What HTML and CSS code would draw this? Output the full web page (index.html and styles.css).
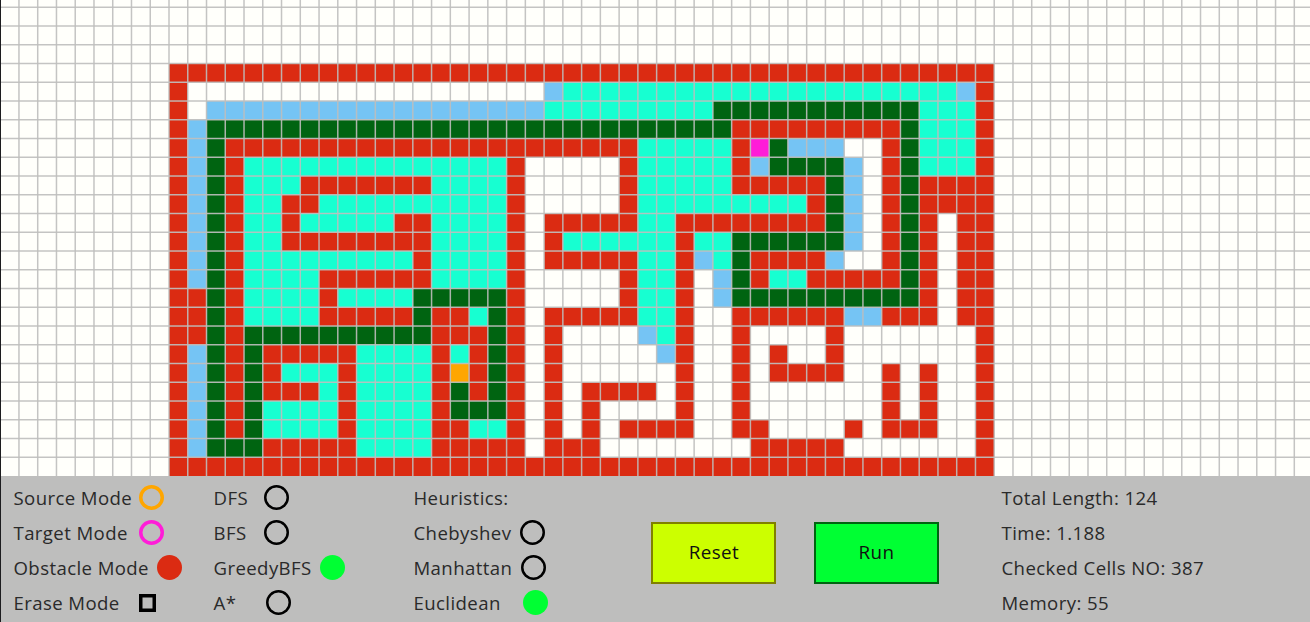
FILE: index.html
```
<!DOCTYPE html>
<html lang="en">
<head>
<meta charset="utf-8">
<title>Pathfinding Visualizer</title>
<link rel="stylesheet" href="styles.css">
</head>
<body>
<div class="app">
  <svg class="board" id="board" width="1310" height="476" viewBox="0 0 1310 476"></svg>
  <div class="panel">
    <div class="col modes">
      <div class="row"><span class="label w125">Source Mode</span><i class="ring source"></i></div>
      <div class="row"><span class="label w125">Target Mode</span><i class="ring target"></i></div>
      <div class="row"><span class="label w144">Obstacle Mode</span><i class="ring obstacle"></i></div>
      <div class="row"><span class="label w125">Erase Mode</span><i class="square"></i></div>
    </div>
    <div class="col algorithms">
      <div class="row"><span class="label w49">DFS</span><i class="ring"></i></div>
      <div class="row"><span class="label w49">BFS</span><i class="ring"></i></div>
      <div class="row"><span class="label w106">GreedyBFS</span><i class="ring on"></i></div>
      <div class="row"><span class="label w52">A*</span><i class="ring"></i></div>
    </div>
    <div class="col heuristics">
      <div class="row"><span class="label">Heuristics:</span></div>
      <div class="row"><span class="label w106">Chebyshev</span><i class="ring"></i></div>
      <div class="row"><span class="label w107">Manhattan</span><i class="ring"></i></div>
      <div class="row"><span class="label w108">Euclidean</span><i class="ring on"></i></div>
    </div>
    <div class="buttons">
      <button class="btn reset">Reset</button>
      <button class="btn run">Run</button>
    </div>
    <div class="col stats">
      <div class="row"><span class="label">Total Length: 124</span></div>
      <div class="row"><span class="label">Time: 1.188</span></div>
      <div class="row"><span class="label">Checked Cells NO: 387</span></div>
      <div class="row"><span class="label">Memory: 55</span></div>
    </div>
  </div>
</div>
<script src="board.js"></script>
</body>
</html>
```
FILE: styles.css
```
body {
  margin: 0;
  background: #fffffb;
  font-family: "Open Sans", "Noto Sans", sans-serif;
}
.app {
  width: 1310px;
  height: 622px;
  overflow: hidden;
  box-sizing: border-box;
}
.board { display: block; background: #fffffb; }
.grid-line { stroke: #bebebd; stroke-opacity: 0.9; stroke-width: 1.5; }
.edge { fill: #1c1c1e; }
.cell-wall { fill: #db2b12; }
.cell-checked { fill: #17ffd1; }
.cell-open { fill: #75c4f4; }
.cell-path { fill: #006411; }
.cell-target { fill: #ff1cd8; }
.cell-source { fill: #ffa600; }

.panel {
  display: grid;
  grid-template-columns: 200px 200px 237px 351px 1fr;
  height: 146px;
  box-sizing: border-box;
  padding: 4px 0 0 13px;
  border-left: 1px solid #1c1c1e;
  background: #bebebd;
}
.col { display: flex; flex-direction: column; }
.row { display: flex; align-items: center; height: 35px; }
.label {
  flex-shrink: 0;
  margin-left: -0.5px;
  margin-right: 0.5px;
  font-size: 18.6px;
  font-weight: 400;
  letter-spacing: 0.4px;
  line-height: 35px;
  color: #2a2a2a;
  white-space: nowrap;
}
.w49 { width: 49.5px; }
.w52 { width: 52px; }
.w106 { width: 106px; }
.w107 { width: 107px; }
.w108 { width: 108.5px; }
.w125 { width: 124.5px; }
.w144 { width: 143px; }
.ring {
  width: 25px;
  height: 25px;
  border-radius: 50%;
  box-shadow: inset 0 0 0 2.5px #000;
}
.ring.source { box-shadow: inset 0 0 0 3.5px #ffa600; }
.ring.target { box-shadow: inset 0 0 0 3.5px #ff1cd8; }
.ring.obstacle { box-shadow: none; background: #db2b12; }
.ring.on { box-shadow: none; background: #00ff33; }
.square { width: 17.5px; height: 17.5px; margin-top: 1px; box-shadow: inset 0 0 0 3.5px #000; }
.buttons { display: flex; gap: 37.5px; padding-top: 42px; }
.btn {
  width: 125px;
  height: 62px;
  padding: 0 0 3px 1px;
  font: 400 18.8px "Open Sans", "Noto Sans", sans-serif;
  letter-spacing: 0.4px;
  color: #101010;
}
.reset { background: #ccff00; border: 2px solid #808000; }
.run { background: #00ff33; border: 2px solid #006411; }
```
FILE: board.js
```
// Each row is a list of runs: cell type followed by its length.
const rows = [
  "#44",
  "#1 .19 b1 c21 b1 #1",
  "#1 .1 b18 c9 g11 c3 #1",
  "#1 b1 g28 #9 g1 c3 #1",
  "#1 b1 g1 #22 c5 #1 m1 g1 b3 .2 #1 g1 c3 #1",
  "#1 b1 g1 #1 c14 #1 .5 #1 c5 #1 b1 g4 b1 .1 #1 g1 c3 #1",
  "#1 b1 g1 #1 c3 #7 c4 #1 .5 #1 c5 #5 g1 b1 .1 #1 g1 #4",
  "#1 b1 g1 #1 c2 #2 c10 #1 .5 #1 c9 #1 g1 b1 .1 #1 g1 #4",
  "#1 b1 g1 #1 c2 #1 c5 #2 c4 #1 .1 #5 c2 #8 g1 b1 .1 #1 g1 #1 .1 #2",
  "#1 b1 g1 #1 c2 #8 c4 #1 .1 #1 c6 #1 c2 g6 b1 .1 #1 g1 #1 .1 #2",
  "#1 b1 g1 #1 c9 #1 c4 #1 .1 #5 c2 #1 b1 c1 g1 #4 b1 .2 #1 g1 #1 .1 #2",
  "#1 b1 g1 #1 c4 #6 c4 #1 .5 #1 c2 #1 .1 b1 g1 #1 c2 #5 g1 #1 .1 #2",
  "#2 g1 #1 c4 #1 c4 g5 #1 .5 #1 c2 #1 .1 b1 g10 #1 .1 #2",
  "#2 g1 #1 c4 #5 g1 #2 c1 g1 #1 .1 #5 c2 #1 .2 #6 b2 #3 .1 #2",
  "#2 g1 #1 g10 #3 g1 #1 .1 #1 .4 b1 c1 #1 .2 #1 .4 #1 .7 #1",
  "#1 b1 g1 #1 g1 #5 c4 #1 c1 #1 g1 #1 .1 #1 .5 b1 #1 .2 #1 .1 #1 .2 #1 .7 #1",
  "#1 b1 g1 #1 g1 #1 c3 #1 c4 #1 o1 #1 g1 #1 .1 #1 .6 #1 .2 #1 .1 #4 .2 #1 .1 #1 .2 #1",
  "#1 b1 g1 #1 g1 #3 c1 #1 c4 #1 g1 #1 g1 #1 .1 #1 .1 #4 .1 #1 .2 #1 .7 #1 .1 #1 .2 #1",
  "#1 b1 g1 #1 g1 c4 #1 c4 #1 g3 #1 .1 #1 .1 #1 .4 #1 .2 #1 .7 #1 .1 #1 .2 #1",
  "#1 b1 g1 #1 g1 c4 #1 c4 #2 c2 #1 .1 #1 .1 #1 .1 #4 .2 #2 .4 #1 .1 #3 .2 #1",
  "#1 b1 g3 #5 c4 #5 .1 #3 .8 #5 .7 #1",
  "#44"
];
const types = { "#": "wall", c: "checked", b: "open", g: "path", m: "target", o: "source" };
const pitch = 18.755, left = 169, top0 = 63.6, rowPitch = 18.75;
const svg = document.getElementById("board");

function add(name, attrs) {
  const el = document.createElementNS("http://www.w3.org/2000/svg", name);
  for (const key in attrs) el.setAttribute(key, attrs[key]);
  svg.appendChild(el);
}

rows.forEach((row, r) => {
  let c = 0;
  row.split(" ").forEach(run => {
    const n = Number(run.slice(1));
    if (types[run[0]]) {
      add("rect", {
        class: "cell-" + types[run[0]],
        x: left + c * pitch, y: top0 + r * rowPitch,
        width: n * pitch, height: rowPitch
      });
    }
    c += n;
  });
});
for (let x = left - 8 * pitch; x < 1310; x += pitch)
  add("line", { class: "grid-line", x1: x, x2: x, y1: 0, y2: 476 });
for (let y = top0 - 3 * rowPitch; y < 476; y += rowPitch)
  add("line", { class: "grid-line", x1: 0, x2: 1310, y1: y, y2: y });
add("rect", { class: "edge", x: 0, y: 0, width: 1, height: 476 });
```
